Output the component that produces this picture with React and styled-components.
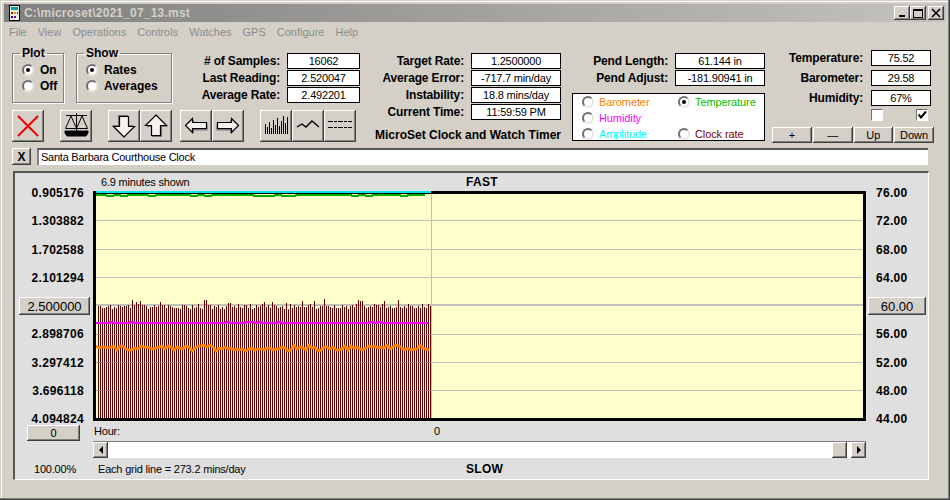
import React from "react";
import styled, { createGlobalStyle, css } from "styled-components";

const raised = css`
  background: #d4d0c8;
  box-shadow: inset -1px -1px 0 #404040, inset 1px 1px 0 #fff, inset -2px -2px 0 #808080;
`;

const GlobalStyle = createGlobalStyle`
  html, body { margin: 0; padding: 0; background: #d4d0c8; }
  body { font-family: "Liberation Sans", Arial, sans-serif; font-size: 11px; letter-spacing: -0.2px; color: #000; }
`;

const rand = (i, k = 1) => {
  const v = Math.sin(i * 12.9898 * k + 4.1) * 43758.5453;
  return v - Math.floor(v);
};

const BAR_COUNT = 167;
const bars = Array.from({ length: BAR_COUNT }, (_, i) => {
  const spike = rand(i, 3) > 0.85 ? 5 : 0;
  return { x: 5 + i * 2, top: 113 + Math.round(rand(i) * 5) - spike };
});
const toPoints = (fn, step) => {
  const pts = [];
  for (let x = 3; x <= 338; x += step) pts.push(`${x},${fn(x)}`);
  return pts.join(" ");
};
const orangeLine = toPoints((x) => 157 + Math.round((rand(x, 2) - 0.5) * 6), 3);
const magentaLine = toPoints((x) => 132 - (rand(x, 5) > 0.85 ? 1 : 0), 4);
const greenLine = toPoints((x) => 4 + (rand(x, 7) > 0.6 ? 1 : 0), 7);
const gridLines = [29, 58, 86, 143, 171, 199];

const Window = styled.div`
  width: 950px;
  height: 500px;
  box-sizing: border-box;
  padding: 4px;
  overflow: hidden;
  background: #d4d0c8;
  box-shadow: inset -1px -1px 0 #404040, inset -2px -2px 0 #808080, inset 1px 1px 0 #d4d0c8, inset 2px 2px 0 #fff;
`;

const TitleBar = styled.div`
  height: 18px;
  display: flex;
  align-items: center;
  padding: 0 2px 0 5px;
  background: linear-gradient(90deg, #808080, #c4c2bc);
`;

const AppIcon = styled.svg`
  width: 11px;
  height: 16px;
  margin-right: 4px;
`;

const TitleText = styled.span`
  flex: 1;
  font-size: 12px;
  font-weight: bold;
  letter-spacing: 0.2px;
  color: #d4d0c8;
`;

const CaptionButton = styled.button`
  ${raised}
  width: 16px;
  height: 14px;
  margin-left: ${(p) => (p.$gap ? "2px" : "0")};
  padding: 0;
  border: 0;
  display: flex;
  align-items: center;
  justify-content: center;
`;

const MenuBar = styled.div`
  height: 19px;
  display: flex;
  align-items: center;
  gap: 11px;
  padding-left: 5px;
  letter-spacing: 0;
  color: #8c8c8c;
`;

const TopPanel = styled.div`
  height: 107px;
  display: flex;
  align-items: flex-start;
  padding-left: 8px;
`;

const LeftColumn = styled.div`
  width: 348px;
  padding-top: 11px;
`;

const GroupRow = styled.div`
  display: flex;
  align-items: flex-start;
  height: 51px;
`;

const Group = styled.fieldset`
  box-sizing: border-box;
  width: ${(p) => p.$width}px;
  height: 50px;
  margin: 1px 12px 0 0;
  padding: 8px 0 0 9px;
  border: 1px solid #808080;
  box-shadow: 1px 1px 0 #fff, inset 1px 1px 0 #fff;
`;

const GroupTitle = styled.legend`
  height: 1px;
  padding: 0 2px;
  margin-left: -2px;
  font-weight: bold;
  font-size: 12px;
  letter-spacing: 0;
  line-height: 1px;
`;

const RadioRow = styled.div`
  height: 16px;
  display: flex;
  align-items: center;
  gap: ${(p) => (p.$bold ? 6 : 5)}px;
  font-weight: ${(p) => (p.$bold ? "bold" : "normal")};
  font-size: ${(p) => (p.$bold ? 12 : 11)}px;
  color: ${(p) => p.$color || "#000"};
  letter-spacing: ${(p) => (p.$bold ? "0" : "-0.1px")};
  white-space: nowrap;
`;

const RadioDot = styled.span`
  box-sizing: border-box;
  width: 12px;
  height: 12px;
  flex: none;
  border-radius: 50%;
  background: #fff;
  border: 2px solid;
  border-color: #707070 #e8e6e0 #e8e6e0 #707070;
  display: flex;
  align-items: center;
  justify-content: center;
  &::after {
    content: "";
    width: 4px;
    height: 4px;
    border-radius: 50%;
    background: ${(p) => (p.$on ? "#000" : "transparent")};
  }
`;

const FieldGrid = styled.div`
  display: grid;
  grid-template-columns: 1fr ${(p) => p.$box}px;
  column-gap: ${(p) => p.$gap || 7}px;
  row-gap: ${(p) => p.$rowGap || 2}px;
  grid-auto-rows: 15px;
  align-items: center;
`;

const StatsGrid = styled(FieldGrid)`
  margin: 1px 0 0 auto;
  flex: 1;
`;

const FieldLabel = styled.span`
  text-align: right;
  font-size: 12px;
  font-weight: bold;
  letter-spacing: -0.15px;
  white-space: nowrap;
`;

const ValueBox = styled.div`
  box-sizing: border-box;
  height: 16px;
  border: 1px solid #000;
  background: #fff;
  text-align: center;
  line-height: 14px;
  white-space: nowrap;
`;

const Toolbar = styled.div`
  display: flex;
  margin-top: 7px;
`;

const ToolButton = styled.button`
  ${raised}
  width: 32px;
  height: 32px;
  padding: 0;
  border: 0;
  margin-left: ${(p) => p.$gap || 0}px;
  display: block;
  svg {
    display: block;
    width: 32px;
    height: 32px;
  }
`;

const MiddleColumn = styled.div`
  width: 196px;
  margin-left: 5px;
  padding-top: 12px;
`;

const Caption = styled.div`
  margin-top: 9px;
  text-align: right;
  font-size: 12px;
  font-weight: bold;
  letter-spacing: 0;
  white-space: nowrap;
`;

const PendColumn = styled.div`
  width: 193px;
  margin-left: 11px;
  padding-top: 12px;
`;

const ChannelBox = styled.div`
  box-sizing: border-box;
  height: 48px;
  margin-top: 8px;
  border: 1px solid #000;
  background: #fff;
  padding: 0 0 0 9px;
  display: grid;
  grid-template-columns: 96px 1fr;
  grid-auto-rows: 16px;
`;

const EnvColumn = styled.div`
  width: 162px;
  margin-left: 7px;
  padding-top: 9px;
`;

const EnvGrid = styled(FieldGrid)`
  padding-right: 3px;
`;

const CheckRow = styled.div`
  display: flex;
  gap: 33px;
  margin-top: 4px;
  padding-left: 99px;
`;

const CheckBox = styled.span`
  box-sizing: border-box;
  width: 12px;
  height: 12px;
  background: #fff;
  border: 1px solid;
  border-color: #707070 #fff #fff #707070;
  display: flex;
  svg {
    display: block;
  }
`;

const StepRow = styled.div`
  display: flex;
  gap: 1px;
  margin-top: 6px;
`;

const StepButton = styled.button`
  ${raised}
  width: 40px;
  height: 16px;
  padding: 0;
  border: 0;
  font: 11px "Liberation Sans", Arial, sans-serif;
  line-height: 14px;
`;

const DescriptionRow = styled.div`
  display: flex;
  height: 17px;
  padding-left: 8px;
`;

const SmallButton = styled.button`
  ${raised}
  width: 19px;
  height: 17px;
  padding: 0;
  border: 0;
  font: bold 12px "Liberation Sans", Arial, sans-serif;
`;

const DescriptionInput = styled.div`
  box-sizing: border-box;
  width: 891px;
  margin-left: 6px;
  padding-left: 2px;
  background: #fff;
  border-top: 2px solid #555;
  border-left: 2px solid #808080;
  line-height: 14px;
  letter-spacing: -0.25px;
`;

const ChartPanel = styled.div`
  box-sizing: border-box;
  width: 916px;
  height: 309px;
  margin: 6px 0 0 9px;
  background: #dfdfdf;
  border-top: 2px solid #555;
  border-left: 2px solid #555;
  border-right: 1px solid #fff;
  border-bottom: 1px solid #fff;
  display: grid;
  grid-template-columns: 78px 773px 1fr;
  grid-template-rows: 18px 230px 20px 18px 1fr;
`;

const ChartInfo = styled.div`
  grid-column: 2;
  grid-row: ${(p) => p.$row};
  display: flex;
  align-items: center;
  padding-left: ${(p) => p.$pad}px;
`;

const InfoText = styled.span`
  width: ${(p) => p.$width}px;
  flex: none;
`;

const EdgeWord = styled.span`
  font-size: 12px;
  font-weight: bold;
  letter-spacing: 0.3px;
`;

const PlotSvg = styled.svg`
  grid-column: 2;
  grid-row: 2;
  display: block;
`;

const Axis = styled.div`
  grid-row: 2;
  grid-column: ${(p) => (p.$right ? 3 : 1)};
  align-self: start;
  height: 242px;
  margin-top: -6px;
  display: flex;
  flex-direction: column;
  justify-content: space-between;
  align-items: ${(p) => (p.$right ? "flex-start" : "flex-end")};
`;

const AxisLabel = styled.span`
  height: 16px;
  line-height: 16px;
  font-size: 12px;
  font-weight: bold;
  letter-spacing: 0.3px;
  margin: ${(p) => (p.$right ? "0 0 0 10px" : "0 9px 0 0")};
`;

const AxisButton = styled.button`
  ${raised}
  box-sizing: border-box;
  width: ${(p) => p.$width}px;
  height: 18px;
  margin: ${(p) => (p.$right ? "-1px 0 -1px 2px" : "-1px 3px -1px 0")};
  padding: 0;
  border: 0;
  font: 13px "Liberation Sans", Arial, sans-serif;
`;

const ZeroButton = styled.button`
  ${raised}
  grid-column: 1;
  grid-row: 3;
  width: 53px;
  height: 16px;
  margin: 4px 0 0 12px;
  padding: 0;
  border: 0;
  font: 11px "Liberation Sans", Arial, sans-serif;
`;

const Scrollbar = styled.div`
  grid-column: 2;
  grid-row: 4;
  height: 17px;
  display: flex;
  background: #fff;
  border-top: 1px solid #808080;
  box-sizing: border-box;
`;

const ScrollArrow = styled.button`
  ${raised}
  width: 15px;
  height: 16px;
  padding: 0;
  border: 0;
  flex: none;
  display: flex;
  align-items: center;
  justify-content: center;
  &::after {
    content: "";
    border: 4px solid transparent;
    border-left: ${(p) => (p.$dir === "right" ? "4px solid #000" : "0")};
    border-right: ${(p) => (p.$dir === "left" ? "4px solid #000" : "0")};
  }
`;

const ScrollTrack = styled.div`
  flex: 1;
  display: flex;
  justify-content: flex-end;
  padding-right: 4px;
`;

const ScrollThumb = styled.div`
  ${raised}
  width: 15px;
  height: 16px;
`;

const Percent = styled.div`
  grid-column: 1;
  grid-row: 5;
  display: flex;
  align-items: center;
  padding-left: 19px;
`;

const Arrow = ({ rotate }) => (
  <svg viewBox="0 0 32 32">
    <g transform={`rotate(${rotate} 16 16)`}>
      <path d="M17 6 L28 17 L22 17 L22 27 L12 27 L12 17 L6 17 Z" fill="#777" />
      <path d="M16 5 L26.5 15.5 L20.5 15.5 L20.5 25.5 L11.5 25.5 L11.5 15.5 L5.5 15.5 Z" fill="#f4f2ec" stroke="#000" strokeWidth="1.2" />
    </g>
  </svg>
);

const SideArrow = ({ left }) => (
  <svg viewBox="0 0 32 32">
    <g transform={left ? "" : "translate(32 0) scale(-1 1)"}>
      <path d="M6 15.5 L13 8.5 L13 12.5 L26.5 12.5 L26.5 19.5 L13 19.5 L13 22.5 Z" fill="#777" transform="translate(1 1)" />
      <path d="M5.5 15.5 L12.5 8.5 L12.5 12.5 L26.5 12.5 L26.5 18.5 L12.5 18.5 L12.5 22.5 Z" fill="#f4f2ec" stroke="#000" strokeWidth="1.2" />
    </g>
  </svg>
);

const barHeights = [10, 7, 12, 6, 14, 9, 16, 8, 13, 18, 11, 17];

export default function App() {
  return (
    <Window>
      <GlobalStyle />
      <TitleBar>
        <AppIcon viewBox="0 0 11 16">
          <rect x="0.5" y="0.5" width="10" height="15" fill="#f0f0e0" stroke="#000" />
          <rect x="2" y="2" width="7" height="3" fill="#00a0a0" />
          <rect x="2" y="7" width="2" height="2" fill="#c00000" />
          <rect x="5" y="7" width="2" height="2" fill="#c8a000" />
          <rect x="8" y="7" width="1" height="2" fill="#008000" />
          <rect x="2" y="11" width="2" height="2" fill="#000080" />
          <rect x="5" y="11" width="2" height="2" fill="#800080" />
        </AppIcon>
        <TitleText>C:\microset\2021_07_13.mst</TitleText>
        <CaptionButton aria-label="Minimize">
          <svg width="10" height="10"><rect x="2" y="7" width="6" height="2" /></svg>
        </CaptionButton>
        <CaptionButton aria-label="Maximize">
          <svg width="10" height="10"><rect x="0.5" y="1.5" width="9" height="8" fill="none" stroke="#000" /><rect x="0" y="1" width="10" height="2" /></svg>
        </CaptionButton>
        <CaptionButton $gap aria-label="Close">
          <svg width="10" height="10"><path d="M1 1 L9 9 M9 1 L1 9" stroke="#000" strokeWidth="1.6" /></svg>
        </CaptionButton>
      </TitleBar>
      <MenuBar>
        {["File", "View", "Operations", "Controls", "Watches", "GPS", "Configure", "Help"].map((m) => (
          <span key={m}>{m}</span>
        ))}
      </MenuBar>

      <TopPanel>
        <LeftColumn>
          <GroupRow>
            <Group $width={52}>
              <GroupTitle>Plot</GroupTitle>
              <RadioRow $bold><RadioDot $on />On</RadioRow>
              <RadioRow $bold><RadioDot />Off</RadioRow>
            </Group>
            <Group $width={96}>
              <GroupTitle>Show</GroupTitle>
              <RadioRow $bold><RadioDot $on />Rates</RadioRow>
              <RadioRow $bold><RadioDot />Averages</RadioRow>
            </Group>
            <StatsGrid $box={73}>
              <FieldLabel># of Samples:</FieldLabel>
              <ValueBox>16062</ValueBox>
              <FieldLabel>Last Reading:</FieldLabel>
              <ValueBox>2.520047</ValueBox>
              <FieldLabel>Average Rate:</FieldLabel>
              <ValueBox>2.492201</ValueBox>
            </StatsGrid>
          </GroupRow>
          <Toolbar>
            <ToolButton aria-label="Stop">
              <svg viewBox="0 0 32 32"><path d="M6 6 L26 26 M26 6 L6 26" stroke="#f00000" strokeWidth="2" /></svg>
            </ToolButton>
            <ToolButton $gap={16} aria-label="Balance">
              <svg viewBox="0 0 32 32" fill="none" stroke="#000">
                <path d="M6 5.5 H27 M16.5 3 V21" />
                <path d="M11 6 L5.5 18.5 H16.5 Z M22 6 L16.5 18.5 H27.5 Z" />
                <path d="M5 21 H28 V23 L26 26 H7 L5 23 Z" fill="#000" />
              </svg>
            </ToolButton>
            <ToolButton $gap={16} aria-label="Down"><Arrow rotate={180} /></ToolButton>
            <ToolButton aria-label="Up"><Arrow rotate={0} /></ToolButton>
            <ToolButton $gap={8} aria-label="Left"><SideArrow left /></ToolButton>
            <ToolButton aria-label="Right"><SideArrow /></ToolButton>
            <ToolButton $gap={16} aria-label="Bars">
              <svg viewBox="0 0 32 32">
                {barHeights.map((h, i) => (
                  <rect key={i} x={5 + i * 2} y={24 - h} width="1" height={h} fill="#000" />
                ))}
              </svg>
            </ToolButton>
            <ToolButton aria-label="Line">
              <svg viewBox="0 0 32 32"><path d="M5 17 L10 14 L14 17 L20 11 L27 17" fill="none" stroke="#000" strokeWidth="1.4" /></svg>
            </ToolButton>
            <ToolButton aria-label="Average">
              <svg viewBox="0 0 32 32">
                <path d="M4 11.5 H28 M4 17.5 H28" stroke="#000" strokeDasharray="5 1 3 1" />
              </svg>
            </ToolButton>
          </Toolbar>
        </LeftColumn>

        <MiddleColumn>
          <FieldGrid $box={90}>
            <FieldLabel>Target Rate:</FieldLabel>
            <ValueBox>1.2500000</ValueBox>
            <FieldLabel>Average Error:</FieldLabel>
            <ValueBox>-717.7 min/day</ValueBox>
            <FieldLabel>Instability:</FieldLabel>
            <ValueBox>18.8 mins/day</ValueBox>
            <FieldLabel>Current Time:</FieldLabel>
            <ValueBox>11:59:59 PM</ValueBox>
          </FieldGrid>
          <Caption>MicroSet Clock and Watch Timer</Caption>
        </MiddleColumn>

        <PendColumn>
          <FieldGrid $box={90}>
            <FieldLabel>Pend Length:</FieldLabel>
            <ValueBox>61.144 in</ValueBox>
            <FieldLabel>Pend Adjust:</FieldLabel>
            <ValueBox>-181.90941 in</ValueBox>
          </FieldGrid>
          <ChannelBox>
            <RadioRow $color="#ff8000"><RadioDot />Barometer</RadioRow>
            <RadioRow $color="#00c000"><RadioDot $on />Temperature</RadioRow>
            <RadioRow $color="#ff00ff"><RadioDot />Humidity</RadioRow>
            <span />
            <RadioRow $color="#00ffff"><RadioDot />Amplitude</RadioRow>
            <RadioRow $color="#800000"><RadioDot />Clock rate</RadioRow>
          </ChannelBox>
        </PendColumn>

        <EnvColumn>
          <EnvGrid $box={60} $gap={8} $rowGap={5}>
            <FieldLabel>Temperature:</FieldLabel>
            <ValueBox>75.52</ValueBox>
            <FieldLabel>Barometer:</FieldLabel>
            <ValueBox>29.58</ValueBox>
            <FieldLabel>Humidity:</FieldLabel>
            <ValueBox>67%</ValueBox>
          </EnvGrid>
          <CheckRow>
            <CheckBox />
            <CheckBox>
              <svg width="10" height="10"><path d="M1.5 4.5 L4 7.5 L9 1.5" fill="none" stroke="#000" strokeWidth="2" /></svg>
            </CheckBox>
          </CheckRow>
          <StepRow>
            <StepButton>+</StepButton>
            <StepButton>—</StepButton>
            <StepButton>Up</StepButton>
            <StepButton>Down</StepButton>
          </StepRow>
        </EnvColumn>
      </TopPanel>

      <DescriptionRow>
        <SmallButton>X</SmallButton>
        <DescriptionInput>Santa Barbara Courthouse Clock</DescriptionInput>
      </DescriptionRow>

      <ChartPanel>
        <ChartInfo $row={1} $pad={8}>
          <InfoText $width={365}>6.9 minutes shown</InfoText>
          <EdgeWord>FAST</EdgeWord>
        </ChartInfo>

        <Axis>
          <AxisLabel>0.905176</AxisLabel>
          <AxisLabel>1.303882</AxisLabel>
          <AxisLabel>1.702588</AxisLabel>
          <AxisLabel>2.101294</AxisLabel>
          <AxisButton $width={71}>2.500000</AxisButton>
          <AxisLabel>2.898706</AxisLabel>
          <AxisLabel>3.297412</AxisLabel>
          <AxisLabel>3.696118</AxisLabel>
          <AxisLabel>4.094824</AxisLabel>
        </Axis>

        <PlotSvg width="773" height="230" viewBox="0 0 773 230" shapeRendering="crispEdges">
          <rect width="773" height="230" fill="#ffffcc" />
          {gridLines.map((y) => (
            <rect key={y} x="3" y={y} width="767" height="1" fill="#c0c0c0" />
          ))}
          <rect x="3" y="113" width="767" height="2" fill="#c0c0c0" />
          {bars.map((b) => (
            <rect key={b.x} x={b.x} y={b.top} width="1" height={228 - b.top} fill="#5c0000" />
          ))}
          {gridLines.slice(3).map((y) => (
            <rect key={y} x="3" y={y} width="335" height="1" fill="#a08aa0" opacity="0.6" />
          ))}
          <rect x="338" y="3" width="1" height="225" fill="#c0c0c0" />
          <polyline points={magentaLine} fill="none" stroke="#ff00ff" strokeWidth="2.5" />
          <polyline points={orangeLine} fill="none" stroke="#ff8000" strokeWidth="2.6" shapeRendering="auto" />
          <polyline points={greenLine} fill="none" stroke="#00b000" strokeWidth="2" />
          <rect x="0" y="0" width="773" height="3" fill="#000" />
          <rect x="0" y="0" width="3" height="230" fill="#000" />
          <rect x="770" y="0" width="3" height="230" fill="#000" />
          <rect x="0" y="227" width="773" height="3" fill="#000" />
          <rect x="3" y="0" width="335" height="2" fill="#00e8e8" />
        </PlotSvg>

        <Axis $right>
          <AxisLabel $right>76.00</AxisLabel>
          <AxisLabel $right>72.00</AxisLabel>
          <AxisLabel $right>68.00</AxisLabel>
          <AxisLabel $right>64.00</AxisLabel>
          <AxisButton $right $width={58}>60.00</AxisButton>
          <AxisLabel $right>56.00</AxisLabel>
          <AxisLabel $right>52.00</AxisLabel>
          <AxisLabel $right>48.00</AxisLabel>
          <AxisLabel $right>44.00</AxisLabel>
        </Axis>

        <ZeroButton>0</ZeroButton>
        <ChartInfo $row={3} $pad={1}>
          <InfoText $width={340}>Hour:</InfoText>
          <span>0</span>
        </ChartInfo>

        <Scrollbar>
          <ScrollArrow $dir="left" />
          <ScrollTrack><ScrollThumb /></ScrollTrack>
          <ScrollArrow $dir="right" />
        </Scrollbar>

        <Percent>100.00%</Percent>
        <ChartInfo $row={5} $pad={5}>
          <InfoText $width={368}>Each grid line = 273.2 mins/day</InfoText>
          <EdgeWord>SLOW</EdgeWord>
        </ChartInfo>
      </ChartPanel>
    </Window>
  );
}
